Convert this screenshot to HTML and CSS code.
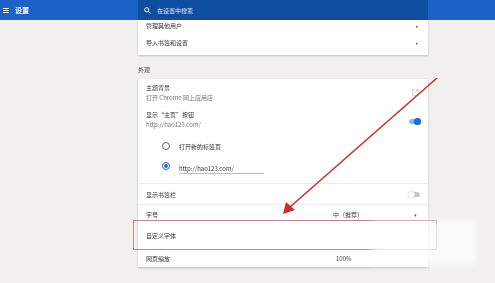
FILE: index.html
```
<!doctype html>
<html lang="zh-CN">
<head>
    <meta charset="UTF-8">
    <title>设置</title>
    <link rel="stylesheet" href="styles.css">
</head>
<body>
    <header class="topbar">
        <div class="topbar-left">
            <span class="menu-icon"><i></i><i></i><i></i></span>
            <span class="topbar-title">设置</span>
        </div>
        <div class="topbar-search">
            <svg class="search-icon" width="7" height="7" viewBox="0 0 10 10">
                <circle cx="4" cy="4" r="3" fill="none" stroke="#fff" stroke-width="1.4"></circle>
                <path d="M6.2 6.2 L9 9" stroke="#fff" stroke-width="1.4"></path>
            </svg>
            <span class="search-text">在设置中搜索</span>
        </div>
        <div class="topbar-right"></div>
    </header>

    <main class="page">
        <section class="card card-top">
            <div class="row row-cut">
                <span class="label">管理其他用户</span>
                <span class="chev">▸</span>
            </div>
            <div class="row row-import">
                <span class="label">导入书签和设置</span>
                <span class="chev">▸</span>
            </div>
        </section>

        <h3 class="section-title">外观</h3>

        <section class="card card-look">
            <div class="row row-two">
                <div class="text">
                    <span class="label">主题背景</span>
                    <span class="sub">打开 Chrome 网上应用店</span>
                </div>
                <svg class="ext-icon" width="7" height="7" viewBox="0 0 10 10">
                    <path d="M4 1 H1 V9 H9 V6" fill="none" stroke="#bbb" stroke-width="1"></path>
                    <path d="M5.5 1 H9 V4.5 M9 1 L4.5 5.5" fill="none" stroke="#bbb" stroke-width="1"></path>
                </svg>
            </div>
            <div class="row row-two row-home">
                <div class="text">
                    <span class="label">显示“主页”按钮</span>
                    <span class="sub">http://hao123.com/</span>
                </div>
                <span class="toggle on"><i></i></span>
            </div>
            <div class="radio-group">
                <div class="radio-row">
                    <span class="radio"></span>
                    <span class="label">打开新的标签页</span>
                </div>
                <div class="radio-row">
                    <span class="radio checked"></span>
                    <span class="url-input">http://hao123.com/</span>
                </div>
            </div>
            <div class="row row-line row-bookmarks">
                <span class="label">显示书签栏</span>
                <span class="toggle"><i></i></span>
            </div>
            <div class="row row-line row-font">
                <span class="label">字号</span>
                <span class="select">中（推荐）</span>
                <span class="caret">▾</span>
            </div>
            <div class="row row-custom">
                <span class="label">自定义字体</span>
            </div>
            <div class="row row-zoom">
                <span class="label">网页缩放</span>
                <span class="select">100%</span>
            </div>
        </section>
    </main>

    <svg class="arrow" width="495" height="283" viewBox="0 0 495 283">
        <path d="M437 78 L290 207" stroke="#c9302c" stroke-width="1.6" fill="none"></path>
        <path d="M283 214 L286 202 L295 210 Z" fill="#c9302c"></path>
    </svg>
    <div class="blur-mark"></div>
</body>
</html>
```
FILE: styles.css
```
* {
    box-sizing: border-box;
}

html, body {
    margin: 0;
    width: 495px;
    height: 283px;
    overflow: hidden;
}

body {
    position: relative;
    background: #f1f0ef;
    font-family: "Noto Sans CJK SC", "Noto Sans", "Liberation Sans", sans-serif;
    font-size: 6px;
    color: #333;
}

.topbar {
    display: flex;
    height: 20px;
    background: #1a62c8;
}

.topbar-left {
    width: 138px;
    display: flex;
    align-items: center;
    padding-left: 3px;
    color: #fff;
}

.menu-icon {
    display: flex;
    flex-direction: column;
    gap: 1px;
    width: 6px;
    margin-right: 6px;
}

.menu-icon i {
    display: block;
    height: 1px;
    background: #fff;
}

.topbar-title {
    font-size: 7px;
    font-weight: bold;
}

.topbar-search {
    width: 290px;
    display: flex;
    align-items: center;
    padding-left: 6px;
    background: #0d4e9e;
    color: #dfe8f5;
}

.search-icon {
    margin-right: 6px;
}

.search-text {
    font-size: 6px;
}

.topbar-right {
    flex: 1;
}

.page {
    padding-left: 138px;
    width: 428px;
}

.card {
    background: #fff;
    box-shadow: 0 1px 2px rgba(0, 0, 0, .22);
    will-change: transform;
}

.row {
    display: flex;
    align-items: center;
    padding: 0 8px;
}

.label {
    color: #333;
}

.chev {
    margin-left: auto;
    font-size: 5px;
    color: #777;
    margin-right: 1px;
}

.row-cut {
    height: 10px;
}

.row-import {
    height: 25px;
}

.section-title {
    margin: 0;
    padding: 10px 0 4px;
    height: 24px;
    font-size: 6px;
    font-weight: normal;
    color: #444;
    line-height: 10px;
}

.row-two {
    height: 27px;
}

.text {
    display: flex;
    flex-direction: column;
    line-height: 10px;
}

.sub {
    color: #707070;
}

.ext-icon {
    margin-left: auto;
    margin-right: 1px;
}

.row-home .toggle {
    margin-top: 4px;
}

.toggle {
    margin-left: auto;
    margin-right: 0;
    position: relative;
    width: 11px;
    height: 5px;
    border-radius: 3px;
    background: #c6c6c6;
}

.toggle i {
    position: absolute;
    top: -1px;
    left: -1px;
    width: 7px;
    height: 7px;
    border-radius: 50%;
    background: #f8f8f8;
    box-shadow: 0 0 1px rgba(0, 0, 0, .4);
}

.toggle.on {
    background: #8fb6ee;
}

.toggle.on i {
    left: auto;
    right: -1px;
    background: #1a6fe0;
}

.radio-group {
    padding: 3px 0 7px 24px;
}

.radio-row {
    display: flex;
    align-items: center;
    height: 20px;
}

.radio {
    width: 8px;
    height: 8px;
    border-radius: 50%;
    border: 1px solid #5f5f5f;
    margin-right: 9px;
    position: relative;
}

.radio.checked {
    border-color: #1a6fe0;
}

.radio.checked::after {
    content: "";
    position: absolute;
    top: 1px;
    left: 1px;
    width: 4px;
    height: 4px;
    border-radius: 50%;
    background: #1a6fe0;
}

.url-input {
    width: 85px;
    padding-top: 1px;
    border-bottom: 1px solid #bdbdbd;
    line-height: 9px;
    margin-top: 4px;
}

.row-line {
    border-top: 1px solid #ececec;
}

.row-bookmarks {
    height: 21px;
}

.row-font {
    height: 16px;
    padding-top: 4px;
}

.select {
    color: #444;
}

.row-font .select {
    margin-left: 175px;
}

.caret {
    margin-left: auto;
    margin-right: 3px;
    font-size: 5px;
    color: #555;
}

.row-custom {
    position: relative;
    height: 30px;
}

.row-custom::after {
    content: "";
    position: absolute;
    top: 0;
    bottom: 0;
    left: -5px;
    right: -9px;
    border: 1px solid #b98a8a;
}

.row-zoom {
    height: 17px;
}

.row-zoom .select {
    margin-left: 166px;
}

.arrow {
    position: absolute;
    top: 0;
    left: 0;
}

.blur-mark {
    position: absolute;
    left: 372px;
    top: 221px;
    width: 104px;
    height: 44px;
    background: rgba(255, 255, 255, .75);
    filter: blur(3px);
}
```
